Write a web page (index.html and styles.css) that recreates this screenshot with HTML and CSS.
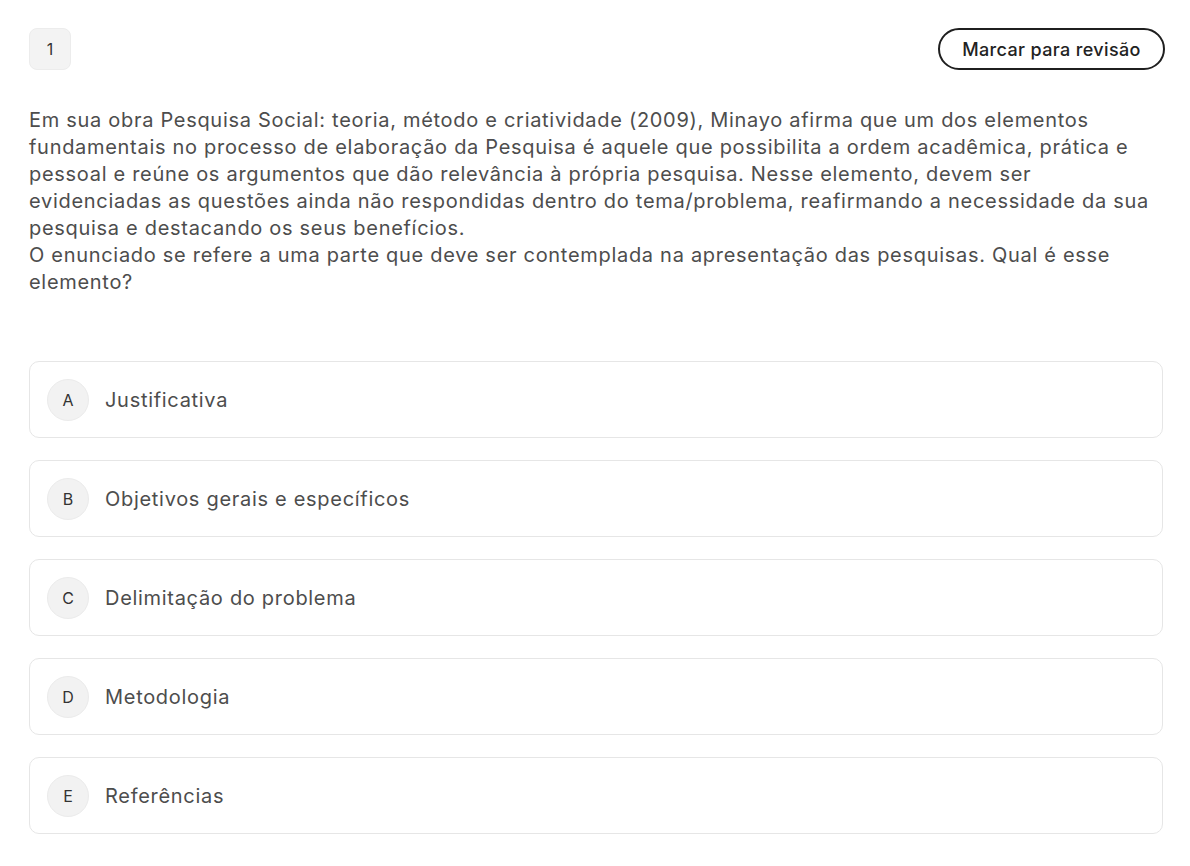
FILE: index.html
```html
<!DOCTYPE html>
<html lang="pt">
<head>
<meta charset="utf-8">
<link rel="stylesheet" href="styles.css">
</head>
<body>
<div class="page">
  <div class="header">
    <div class="qnum">1</div>
    <button class="review">Marcar para revisão</button>
  </div>
  <div class="statement">
    <p>Em sua obra Pesquisa Social: teoria, método e criatividade (2009), Minayo afirma que um dos elementos fundamentais no processo de elaboração da Pesquisa é aquele que possibilita a ordem acadêmica, prática e pessoal e reúne os argumentos que dão relevância à própria pesquisa. Nesse elemento, devem ser evidenciadas as questões ainda não respondidas dentro do tema/problema, reafirmando a necessidade da sua pesquisa e destacando os seus benefícios.</p>
    <p>O enunciado se refere a uma parte que deve ser contemplada na apresentação das pesquisas. Qual é esse elemento?</p>
  </div>
  <div class="options">
    <div class="option"><span class="letter">A</span><span class="text">Justificativa</span></div>
    <div class="option"><span class="letter">B</span><span class="text">Objetivos gerais e específicos</span></div>
    <div class="option"><span class="letter">C</span><span class="text">Delimitação do problema</span></div>
    <div class="option"><span class="letter">D</span><span class="text">Metodologia</span></div>
    <div class="option"><span class="letter">E</span><span class="text">Referências</span></div>
  </div>
</div>
</body>
</html>
```

FILE: styles.css
```css
* { box-sizing: border-box; }
html, body { margin: 0; padding: 0; background: #ffffff; }
body {
  font-family: Inter, "Noto Sans", "Liberation Sans", sans-serif;
  color: #4d4d4d;
}
.page {
  width: 1134px;
  margin: 0 0 0 29px;
  padding-top: 28px;
}
.header {
  display: flex;
  justify-content: space-between;
  align-items: center;
  height: 42px;
}
.qnum {
  width: 42px;
  height: 42px;
  border-radius: 8px;
  background: #f3f3f3;
  border: 1px solid #ececec;
  display: flex;
  align-items: center;
  justify-content: center;
  font-size: 16px;
  color: #333;
}
.review {
  height: 42px;
  width: 227px;
  margin-right: -2px;
  border: 2px solid #1f1f1f;
  border-radius: 21px;
  background: #fff;
  font-family: inherit;
  font-size: 18px;
  font-weight: 500;
  letter-spacing: 0.02em;
  color: #222;
  padding: 0;
}
.statement {
  margin-top: 37px;
  font-size: 20px;
  line-height: 27px;
  letter-spacing: 0.035em;
}
.statement p { margin: 0; }
.options {
  margin-top: 65px;
  display: flex;
  flex-direction: column;
  gap: 22px;
}
.option {
  height: 77px;
  border: 1px solid #e6e6e6;
  border-radius: 10px;
  display: flex;
  align-items: center;
  padding-left: 17px;
  gap: 16px;
}
.letter {
  width: 42px;
  height: 42px;
  border-radius: 50%;
  background: #f2f2f2;
  border: 1px solid #ebebeb;
  display: flex;
  align-items: center;
  justify-content: center;
  font-size: 16px;
  color: #333;
}
.text {
  font-size: 20px;
  letter-spacing: 0.035em;
  color: #4d4d4d;
}
```
